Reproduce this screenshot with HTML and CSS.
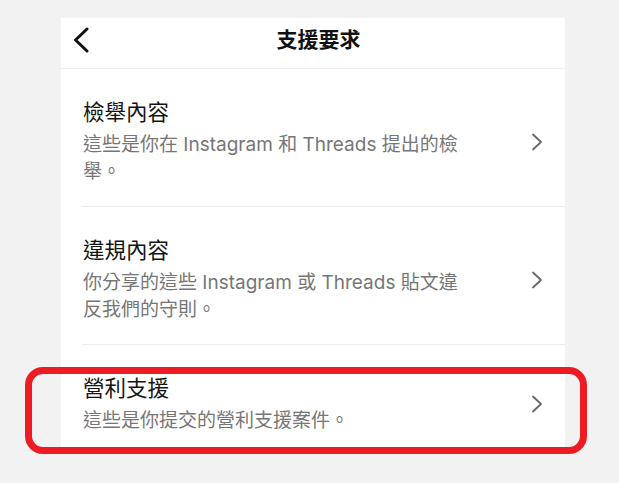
FILE: index.html
```html
<!DOCTYPE html>
<html lang="zh-Hant">
<head>
<meta charset="utf-8">
<title>支援要求</title>
<link rel="stylesheet" href="styles.css">
</head>
<body>
<div class="panel">
  <header class="topbar">
    <div class="back">
      <svg width="18" height="26" viewBox="0 0 18 26"><polyline points="15,2 3.5,13 15,24" fill="none" stroke="#111" stroke-width="3" stroke-linecap="round" stroke-linejoin="round"/></svg>
    </div>
    <h1 class="title">支援要求</h1>
    <div class="spacer"></div>
  </header>
  <ul class="list">
    <li class="item">
      <div class="text">
        <div class="item-title">檢舉內容</div>
        <div class="item-sub">這些是你在 Instagram 和 Threads 提出的檢舉。</div>
      </div>
      <svg class="chev" width="12" height="18" viewBox="0 0 12 18"><polyline points="2,1.5 10,9 2,16.5" fill="none" stroke="#666" stroke-width="1.8" stroke-linecap="round" stroke-linejoin="round"/></svg>
    </li>
    <li class="item">
      <div class="text">
        <div class="item-title">違規內容</div>
        <div class="item-sub">你分享的這些 Instagram 或 Threads 貼文違反我們的守則。</div>
      </div>
      <svg class="chev" width="12" height="18" viewBox="0 0 12 18"><polyline points="2,1.5 10,9 2,16.5" fill="none" stroke="#666" stroke-width="1.8" stroke-linecap="round" stroke-linejoin="round"/></svg>
    </li>
    <li class="item">
      <div class="text">
        <div class="item-title">營利支援</div>
        <div class="item-sub">這些是你提交的營利支援案件。</div>
      </div>
      <svg class="chev" width="12" height="18" viewBox="0 0 12 18"><polyline points="2,1.5 10,9 2,16.5" fill="none" stroke="#666" stroke-width="1.8" stroke-linecap="round" stroke-linejoin="round"/></svg>
    </li>
  </ul>
</div>
<div class="highlight"></div>
</body>
</html>
```
FILE: styles.css
```css
* { box-sizing: border-box; }
html, body {
  margin: 0;
  padding: 0;
}
body {
  width: 619px;
  height: 483px;
  background: #f2f2f2;
  font-family: "Inter", "Noto Sans CJK TC", sans-serif;
  position: relative;
  overflow: hidden;
  padding-top: 18px;
}
.panel {
  margin-left: 61px;
  width: 504px;
  height: 432px;
  background: #ffffff;
  overflow: hidden;
}
.topbar {
  height: 51px;
  border-bottom: 1px solid #efefef;
  display: grid;
  grid-template-columns: 1fr auto 1fr;
  align-items: center;
  padding: 0 0 6px 11px;
}
.back {
  display: flex;
  align-items: center;
}
.back svg { display: block; }
.title {
  margin: 0;
  font-size: 21px;
  font-weight: 700;
  color: #111;
  line-height: 28px;
}
.list {
  list-style: none;
  margin: 0;
  padding: 0 0 0 21px;
}
.item {
  display: flex;
  align-items: center;
  justify-content: space-between;
  padding: 29px 22px 21px 1px;
  border-bottom: 1px solid #ececec;
}
.item:last-child { border-bottom: none; }
.text {
  width: 378px;
}
.item-title {
  font-size: 21.5px;
  line-height: 28px;
  color: #141414;
  margin-bottom: 5px;
}
.item-sub {
  font-size: 19px;
  line-height: 27px;
  color: #767676;
}
.chev { display: block; flex: none; }
.highlight {
  position: absolute;
  left: 25px;
  top: 367px;
  width: 562px;
  height: 87px;
  border: 7px solid #ed1c24;
  border-radius: 18px;
}
```
